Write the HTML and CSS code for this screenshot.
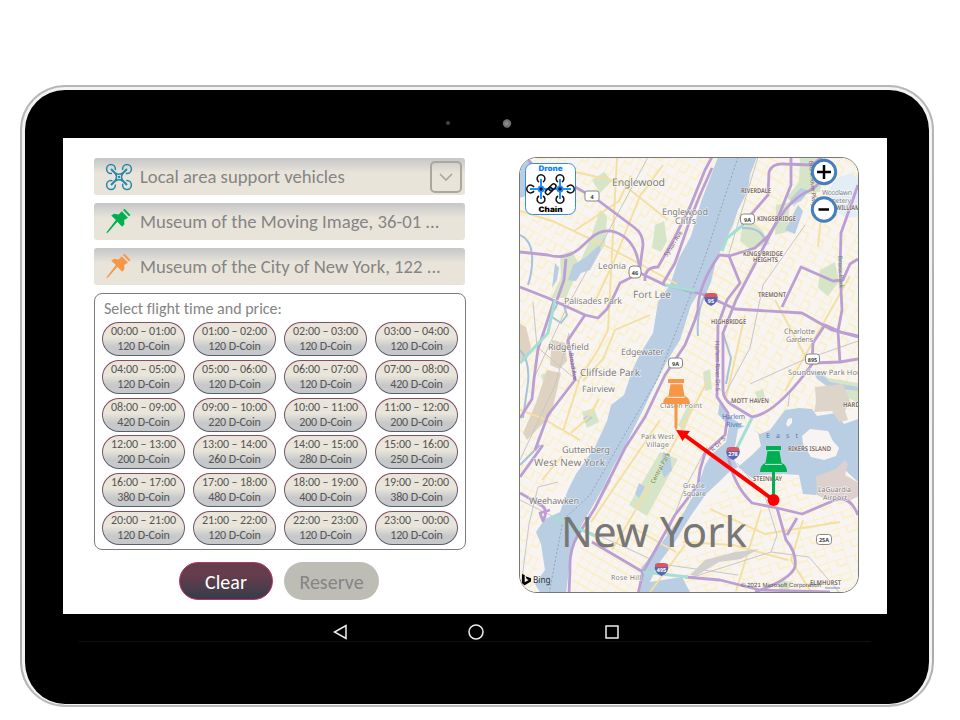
FILE: index.html
```html
<!DOCTYPE html>
<html lang="en">
<head>
<meta charset="utf-8">
<title>Drone Chain</title>
<link rel="stylesheet" href="styles.css">
</head>
<body>
<main class="tablet">
  <div class="bezel">
    <svg class="cameras" viewBox="0 0 70 14"><circle cx="4" cy="7" r="2" fill="#444"/><circle cx="63" cy="7.500" r="4.200" fill="#727272"/><circle cx="62.500" cy="7.500" r="2" fill="#8b8b8b"/></svg>
    <div class="screen">
      <section class="booking">
        <div class="field">
          <svg class="field-icon" viewBox="0 0 28 28" fill="none" stroke="#2787a8" stroke-width="1.500"><circle cx="6" cy="6" r="4.400" stroke-dasharray="23 4.600" stroke-dashoffset="-5.700"/><circle cx="22" cy="6" r="4.400" stroke-dasharray="23 4.600" stroke-dashoffset="-12.600"/><circle cx="6" cy="22" r="4.400" stroke-dasharray="23 4.600" stroke-dashoffset="1.200"/><circle cx="22" cy="22" r="4.400" stroke-dasharray="23 4.600" stroke-dashoffset="8.100"/><path d="M6 6l6 6M22 6l-6 6M6 22l6-6M22 22l-6-6" stroke-width="2"/><path d="M10.500 10q3.500 2.500 7 0-2 4 0 8-3.500-2.500-7 0 2-4 0-8z"/><circle cx="14" cy="14" r="1.200" fill="#2787a8" stroke="none"/></svg>
          <span class="field-text">Local area support vehicles</span>
          <button class="drop" aria-label="Open list"><svg viewBox="0 0 14 8"><path d="M1 1l6 6 6-6" fill="none" stroke="#aaa89d" stroke-width="1.700"/></svg></button>
        </div>
        <div class="field green">
          <svg class="field-icon" viewBox="0 0 28 28" fill="currentColor"><path d="M18 2L19.500.7l6 6.300-1.500 1.300zM16.800 3.300l6.200 6.500-3.800 2.200.2 4.200-2.300 2.500-4.700-5L3 24.500l-1.700.8.800-1.700 8.800-11.500-4.700-4.600 3-1.700 4.400.6z"/></svg>
          <span class="field-text">Museum of the Moving Image, 36-01 ...</span>
        </div>
        <div class="field orange">
          <svg class="field-icon" viewBox="0 0 28 28" fill="currentColor"><path d="M18 2L19.500.7l6 6.300-1.500 1.300zM16.800 3.300l6.200 6.500-3.800 2.200.2 4.200-2.300 2.500-4.700-5L3 24.500l-1.700.8.800-1.700 8.800-11.500-4.700-4.600 3-1.700 4.400.6z"/></svg>
          <span class="field-text">Museum of the City of New York, 122 ...</span>
        </div>
        <div class="times">
          <h2>Select flight time and price:</h2>
          <div class="slots">
            <button>00:00 – 01:00<br>120 D-Coin</button><button>01:00 – 02:00<br>120 D-Coin</button><button>02:00 – 03:00<br>120 D-Coin</button><button>03:00 – 04:00<br>120 D-Coin</button>
            <button>04:00 – 05:00<br>120 D-Coin</button><button>05:00 – 06:00<br>120 D-Coin</button><button>06:00 – 07:00<br>120 D-Coin</button><button>07:00 – 08:00<br>420 D-Coin</button>
            <button>08:00 – 09:00<br>420 D-Coin</button><button>09:00 – 10:00<br>220 D-Coin</button><button>10:00 – 11:00<br>200 D-Coin</button><button>11:00 – 12:00<br>200 D-Coin</button>
            <button>12:00 – 13:00<br>200 D-Coin</button><button>13:00 – 14:00<br>260 D-Coin</button><button>14:00 – 15:00<br>280 D-Coin</button><button>15:00 – 16:00<br>250 D-Coin</button>
            <button>16:00 – 17:00<br>380 D-Coin</button><button>17:00 – 18:00<br>480 D-Coin</button><button>18:00 – 19:00<br>400 D-Coin</button><button>19:00 – 20:00<br>380 D-Coin</button>
            <button>20:00 – 21:00<br>120 D-Coin</button><button>21:00 – 22:00<br>120 D-Coin</button><button>22:00 – 23:00<br>120 D-Coin</button><button>23:00 – 00:00<br>120 D-Coin</button>
          </div>
        </div>
        <div class="actions"><button class="clear">Clear</button><button class="reserve">Reserve</button></div>
      </section>

      <section class="map">
        <svg viewBox="520 158 338 434">
          <defs>
            <pattern id="g1" width="13" height="19" patternUnits="userSpaceOnUse" patternTransform="rotate(29)"><path d="M0 0H13M0 0V19M7 0V9M0 10H7" class="street"/></pattern>
            <pattern id="g2" width="9" height="16" patternUnits="userSpaceOnUse" patternTransform="rotate(30)"><path d="M0 0H9M0 0V16M0 8H9" class="street"/></pattern>
            <pattern id="g3" width="19" height="15" patternUnits="userSpaceOnUse" patternTransform="rotate(-17)"><path d="M0 0H19M0 0V15M9 0V7M9 7H19" class="street"/></pattern>
            <pattern id="g4" width="17" height="15" patternUnits="userSpaceOnUse" patternTransform="rotate(28)"><path d="M0 0H17M0 0V15M8 7V15M0 7H8" class="street"/></pattern>
          </defs>
          <rect x="519" y="157" width="341" height="437" fill="#f8f4f2"/>
          <path d="M519 157H718L675 270 641 350 598 445 543 510 535 594H519z" fill="url(#g1)"/>
          <path d="M756 157L720 250 690 310 655 390 627 445 590 510 568 594H640L730 450 728 410 718 390 723 330 775 225 790 157z" fill="url(#g2)"/>
          <path d="M790 157H860V410H785L760 437 728 410 720 390 723 330z" fill="url(#g4)"/>
          <path d="M735 480L690 520 640 594H860V500L800 470z" fill="url(#g3)"/>
          <g fill="#d6e5c8">
            <path d="M660 452L678 459 647 516 629 505zM600 210L607 216 605 245 592 263 577 268 590 240zM592 180l12-8 8 9-12 12zM560 255l12-4 8 15-14 32h-15l10-20zM655 225l9-4 3 20-6 11-9-4zM800 157h26l-6 35-18 3-8 12-7-10 12-15zM776 205l14-3-3 30-12 3zM742 228l8-8 12 10 8 14-20 5-10-8zM820 270l15-8 4 20-11 14-10-8zM818 370l10 8 30 5v20l-20-10zM738 425l20 7 3 15-20 20-5-6zM582 412l12-4 5 14-12 6zM541 375l10-4 3 10-10 4zM703 372l7-3 2 20-7 2zM755 392l8-3 2 8-7 4zM779 580l12 2-2 9-10-1zM678 425l10-20 5 3-9 23z"/>
          </g>
          <g fill="#b9cde3">
            <path d="M718 157H757L750 175 748 190 738 210 733 225 720 252 706 281 691 305 680 340 667 361 653 389 643 410 626 444 613 467 604 486 591 509 580 528 571 552 566 594H541L535 584 545 570 541 544 536 532 545 519 560 512 568 490 576 474 595 447 607 421 611 405 624 395 632 371 640 354 653 333 658 302 670 285 679 258 691 236 701 202z"/>
            <path d="M720 400L727 415 742 425 760 434 770 430 785 410 799 408 812 409 817 416 836 413 844 424 858 419V482L842 467 824 482 816 495 803 494 799 475 783 474 760 475 752 478 738 467 728 473 720 481 706 494 690 517 676 540 657 566 650 582 682 577 691 594H640L641 568 660 545 684 512 697 489 705 465 712 454 726 442 729 426 718 414z"/>
            <path d="M785 230L798 205 803 211 795 234zM791 198l10-10 8 3-8 10-12 5zM812 370l8 3 10 9 28 5v4l-30-4-11-8zM586 257l13-12 2 5-11 20-9 3-5 8-8-1 5-15zM519 165l8-6 8 7-4 8-5 22-7 2zM639 483l6 4-6 11-4-4zM663 452l7 3 2 15-8 8-3-9zM700 276l9-8 2-7 4 4-4 17-6 14-7-3zM555 263l4 5-2 12-5 8zM583 418l6-3 4 3-8 5z"/>
          </g>
          <g fill="#e2edf6"><path d="M837 178l14-5 7 5v38l-10 2-20-10-2-14z"/></g>
          <g fill="#f8f4f2"><path d="M802 436l8-7 18 2 5 10 6 7-3 8-12 4-13-3-8-13zM786 424l2-5 4-1v5l-4 4z"/><path d="M738 429l8-3 12 7 3 13-9 9-14 12-5-10z"/></g>
          <path d="M816 476l20-7 9-9 3 4-3 11 14 8v13l-10 5-21-1-11-5z" fill="#ddd0cd"/>
          <path d="M815 387l28-3 7 17-5 10 3 9-9 2-7-11-18 1 2-10z" fill="#ddd4ca"/>
          <path d="M519 323l7 4 5 20-5 15-7-3zM552 340l13 3 2 18-8 8-9-4zM547 370l14 3-10 42-24 25-4-7 13-30z" fill="#dfd2c0"/>
          <g fill="none" stroke="#a9c2dc" stroke-width="2">
            <path d="M520 235q11 5 12 20t-4 30M520 350q10 10 8 33l-5 35M563 303l4 12-6 8-9-6M742 228q22-1 24 17M723 333l8 25-5 26M548 317q15-15 5-17M540 445l-20 20M706 292q-10 20-8 44"/>
          </g>
          <path d="M738 157L703 263 657 380 625 434 590 495 563 520 549 594" fill="none" stroke="#91a5b8" stroke-dasharray="2 2"/>
          <g fill="none" stroke="#f4dfa0" stroke-width="1.900">
            <path d="M663 165L640 196 612 266 596 299M520 211L552 221 610 248 677 284M575 172l45 10 48 38M617 157L608 330 598 350 580 378 563 431M650 315l-35 15-12 29-20 22M631 176l-12 25-45 30M520 410l22 8 38 22M599 399l-10 18-18 16M542 480l20-24M630 526l46 26M612 550L665 460 707 382M591 522L660 420M812 190l10 17-4 40M745 315l-19 83M850 276l-65 115M775 300l35 65M788 560l-55-15-50-3M710 509l55 25 75-12M650 592l35-47M803 520l-12 40 20 32M761 510l-25 81"/>
          </g>
          <g fill="none" stroke="#c7c7c7" stroke-width="1">
            <path d="M648 157L607 234 566 309 534 378M533 302l4 45 42 35M520 460l35-75 5-17 9-35M520 594l9-70 9-37 20-5M520 500l32 16 66 28 43 20 77 11M611 480l-22 39M707 447L684 490 667 535M758 157L742 210 728 257M805 225L763 285 750 348 725 394M858 341L801 361 750 384M737 463L765 496 777 535 771 552 690 578M771 552l38 5 30 35M790 390l-2 17"/>
          </g>
          <path d="M690 575l15-15 30-8 24-3-18 10-22 3-23 14z" fill="#d2d0cf"/>
          <g class="road">
            <path d="M520 252L548 255Q566 260 579 249L591 238Q602 228 615 232 638 240 640 273L665 285 690 291"/>
            <path d="M566 259L564 280 557 300"/>
            <path d="M526 157L540 174 575 187 595 198 635 228Q643 234 643 245L639 275"/>
            <path d="M520 287L548 298 585 315 598 318 607 309 613 298 620 283 638 274"/>
            <path d="M645 281Q644 267 658 267L675 237 690 207 705 170 712 157"/>
            <path d="M662 285L675 263 690 220 700 195 712 168"/>
            <path d="M685 290L705 295 735 309 802 313 832 330 858 337"/>
            <path d="M742 225L768 195 769 172Q772 163 785 164L812 165 822 157"/>
            <path d="M720 254Q698 285 698 310L695 320 685 345 665 375 645 417 625 448 595 508 578 535Q569 550 570 570L569 594"/>
            <path d="M720 255L729 256 740 283 727 300 718 325 717 397 728 413 725 435 705 453 700 470 698 485 675 515 643 572 638 594"/>
            <path d="M791 157V185L775 225 756 262 736 300 723 333V390Q723 399 732 405L752 417Q776 414 813 363L840 362 858 359"/>
            <path d="M729 256L755 248 768 236 785 210Q797 195 813 189L822 180"/>
            <path d="M812 363L813 343 825 325 841 332 858 336M840 363L838 331 842 310 840 270 841 233 858 185"/>
            <path d="M782 307L801 267 833 281 843 280 850 264 858 259"/>
            <path d="M728 455Q733 485 752 503L777 508 802 514 835 500Q850 495 858 515M777 508L786 540Q797 553 795 567 790 580 755 592M797 518l-10 17M685 577L720 580 760 590 830 592"/>
            <path d="M520 493L541 505Q549 510 543 521L540 513 550 510M592 542L643 572M543 445L520 477M585 315L568 340 575 380 548 415 535 450M520 418l12-19 2-20 4-30 16-48"/>
          </g>
          <g fill="none" stroke="#a4dfd3" stroke-width="3"><path d="M722 251l5-13 16-13M665 285l30 6M552 517l43 19M520 363l28-30 7-33M752 418l-15 30M643 572l45 5"/></g>
          <g class="place">
            <text x="612" y="186" textLength="53" font-size="10.500">Englewood</text><text x="662" y="215" textLength="46" font-size="9">Englewood</text><text x="675" y="224" textLength="21" font-size="9">Cliffs</text>
            <text x="598" y="269" textLength="28" font-size="8.800">Leonia</text><text x="633" y="298" textLength="38" font-size="10">Fort Lee</text><text x="564" y="304" textLength="58" font-size="8.800">Palisades Park</text>
            <text x="548" y="350" textLength="41" font-size="8.800">Ridgefield</text><text x="621" y="355" textLength="43" font-size="8.800">Edgewater</text><text x="580" y="376" textLength="60" font-size="10">Cliffside Park</text><text x="582" y="392" textLength="33" font-size="8.800">Fairview</text>
            <text x="660" y="408" textLength="42" font-size="7">Clason Point</text><text x="641" y="439" textLength="33" font-size="7">Park West</text><text x="646" y="447" textLength="23" font-size="7">Village</text>
            <text x="562" y="453" textLength="48" font-size="9.300">Guttenberg</text><text x="534" y="466" textLength="71" font-size="10">West New York</text><text x="529" y="504" textLength="50" font-size="9">Weehawken</text>
            <text x="611" y="580" textLength="30" font-size="7">Rose Hill</text><text x="683" y="488" textLength="22" font-size="7">Gracie</text><text x="683" y="496" textLength="23" font-size="7">Square</text>
            <text x="818" y="492" textLength="33" font-size="7">LaGuardia</text><text x="823" y="499.500" textLength="24" font-size="7">Airport</text><text x="784" y="334" textLength="31" font-size="7.500">Charlotte</text><text x="786" y="342" textLength="27" font-size="7.500">Gardens</text>
            <text x="788" y="375" textLength="76" font-size="7.500">Soundview Park Hom</text><text x="822" y="195" textLength="30" font-size="7">Woodlawn</text><text x="822" y="203" textLength="29" font-size="7">Cemetery</text>
          </g>
          <g class="district">
            <text x="741" y="192.500" textLength="30" lengthAdjust="spacingAndGlyphs">RIVERDALE</text><text x="757" y="221" textLength="39" lengthAdjust="spacingAndGlyphs">KINGSBRIDGE</text><text x="743" y="256" textLength="40" lengthAdjust="spacingAndGlyphs">KINGS BRIDGE</text><text x="753" y="261.800" textLength="25" lengthAdjust="spacingAndGlyphs">HEIGHTS</text>
            <text x="758" y="296.500" textLength="28" lengthAdjust="spacingAndGlyphs">TREMONT</text><text x="711" y="323.500" textLength="35" lengthAdjust="spacingAndGlyphs">HIGHBRIDGE</text><text x="731" y="402.500" textLength="38" lengthAdjust="spacingAndGlyphs">MOTT HAVEN</text><text x="843" y="407" textLength="19" lengthAdjust="spacingAndGlyphs">HARDI</text><text x="836" y="210" textLength="24" lengthAdjust="spacingAndGlyphs">WILLIAM</text>
            <text x="788" y="451" textLength="43" lengthAdjust="spacingAndGlyphs">RIKERS ISLAND</text><text x="753" y="481" textLength="29" lengthAdjust="spacingAndGlyphs">STEINWAY</text><text x="810" y="584.500" textLength="31" lengthAdjust="spacingAndGlyphs">ELMHURST</text>
          </g>
          <g class="way">
            <text transform="translate(667 257) rotate(-57)" textLength="29">Sylvan Ave</text><text transform="translate(569 353) rotate(81)" textLength="28">Broad Ave</text><text transform="translate(715 341) rotate(89)" textLength="50">Harlem River Dr S</text><text transform="translate(809 161) rotate(86)" textLength="46">Bronx River Pkwy</text><text transform="translate(838 256) rotate(87)" textLength="32" fill="#64906b">Bronx Park</text><text transform="translate(713 452) rotate(-45)" textLength="18">R Dr S</text><text transform="translate(654 484) rotate(-62)" textLength="34" fill="#4b9370">Central Park</text>
          </g>
          <g class="water"><text x="722" y="419" textLength="23">Harlem</text><text x="726" y="426.500" textLength="16">River</text><text x="766" y="438" textLength="32">East</text></g>
          <text x="561" y="546.500" textLength="186" class="city">New York</text>
          <g class="shield"><rect x="585" y="191" width="14" height="10" rx="2"/><text x="592" y="198.500">4</text><rect x="629" y="266" width="12" height="12" rx="4"/><text x="635" y="275">46</text><rect x="740.500" y="214" width="14" height="10" rx="3"/><text x="747.500" y="221.500">9A</text><rect x="668.500" y="358" width="14" height="10" rx="3"/><text x="675.500" y="365.500">9A</text><rect x="805.500" y="354" width="14" height="10" rx="3"/><text x="812.500" y="361.500">895</text><rect x="816.500" y="534.500" width="15" height="10" rx="3"/><text x="824" y="542">25A</text></g>
          <g class="interstate"><g transform="translate(711 299)"><path d="M-6-5Q0-7 6-5 9 3 0 7-9 3-6-5" fill="#5967ae"/><path d="M-6-5Q0-7 6-5V-2H-6z" fill="#e85359"/><text y="3.500">95</text></g><g transform="translate(733 453)"><path d="M-6-5Q0-7 6-5 9 3 0 7-9 3-6-5" fill="#5967ae"/><path d="M-6-5Q0-7 6-5V-2H-6z" fill="#e85359"/><text y="3">278</text></g><g transform="translate(661.500 569)"><path d="M-6-5Q0-7 6-5 9 3 0 7-9 3-6-5" fill="#5967ae"/><path d="M-6-5Q0-7 6-5V-2H-6z" fill="#e85359"/><text y="3">495</text></g></g>
          <path d="M522 574l2.700 1v7.300l4-2.200-2-1-1.200-2.800 5.500 2v3.200l-6.300 3.700-2.700-1.600z" fill="#000"/><text x="533" y="583" textLength="17.500" lengthAdjust="spacingAndGlyphs" font-size="9.500" fill="#303030">Bing</text>
          <text x="741" y="587" textLength="80" class="copyright">© 2021 Microsoft Corporation</text><path d="M825 588h15" stroke="#577bc1" stroke-width=".8"/>
          <path d="M668 379h16v4h-1.700l2.200 13q5.500 2 5.500 8h-27q0-6 5.500-8l2.200-13H668zM674.500 403h3v24l-1.500 4-1.500-4z" fill="#f79646"/><path d="M669.500 383.700h13M667.300 397.300h17.500" stroke="#f8f4f2"/>
          <path d="M766 446h15v4h-1.700l2.200 13q5.500 2 5.500 9h-27q0-7 5.500-9l2.200-13H766zM772 471h3v24h-3z" fill="#00b050"/><path d="M767.500 450.600h12M765 464.400h17" stroke="#cfdde9"/>
          <path d="M773.500 500L683 434" stroke="#f00" stroke-width="4"/><path d="M676 430l14 1-7.500 10z" fill="#f00"/><circle cx="773.500" cy="500" r="6" fill="#f00"/>
          <g fill="#fff" stroke="#467fbd" stroke-width="3"><circle cx="824" cy="172" r="11.700"/><circle cx="824" cy="209.500" r="11.700"/></g><path d="M817 172h14M824 165v14M818.500 209.500h10.500" stroke="#000" stroke-width="2.500"/>
          <g><rect x="525.500" y="163.500" width="50" height="51" rx="7" fill="#fff" stroke="#398cdf"/><text x="538.500" y="171" textLength="24" lengthAdjust="spacingAndGlyphs" class="logo" fill="#1684f5">Drone</text><text x="538.500" y="212" textLength="24" lengthAdjust="spacingAndGlyphs" class="logo" fill="#000">Chain</text><path d="M530 189h41M541 179v20M560 179v20" stroke="#258fff" stroke-width="2"/><g fill="#258fff"><circle cx="541" cy="189" r="3.500"/><circle cx="560" cy="189" r="3.500"/></g><g fill="#111"><circle cx="541" cy="189" r="1.700"/><circle cx="560" cy="189" r="1.700"/></g><g fill="none" stroke="#111" stroke-width="1.500"><path d="M539 182a3.900 3.900 0 1 1 4 0M558 182a3.900 3.900 0 1 1 4 0M539 196a3.900 3.900 0 1 0 4 0M558 196a3.900 3.900 0 1 0 4 0M534 187a3.900 3.900 0 1 0 0 4M567 187a3.900 3.900 0 1 1 0 4"/><g transform="rotate(-45 550.500 189)"><rect x="544" y="187" width="8" height="4.500" rx="2.200"/><rect x="549" y="187" width="8" height="4.500" rx="2.200"/></g></g></g>
        </svg>
      </section>
    </div>
    <nav class="system-bar"><svg viewBox="0 0 16 16"><path d="M14 1.500v13L2.500 8z"/></svg><svg viewBox="0 0 16 16"><circle cx="8" cy="8" r="7"/></svg><svg viewBox="0 0 16 16"><path d="M2 2h12v12H2z"/></svg></nav>
  </div>
</main>
</body>
</html>
```

FILE: styles.css
```css
* { box-sizing: border-box; }
body { margin: 0; background: #fff; overflow: hidden; font-family: Carlito, Lato, "Noto Sans", sans-serif; font-variant-ligatures: none; }
button { font-family: inherit; font-variant-ligatures: none; padding: 0; }
.tablet { width: 914px; height: 622px; margin: 85px 0 0 20px; padding: 2px; border-radius: 45px; background: linear-gradient(#b5b7b9, #aaa 90%, #bbb); }
.bezel { width: 910px; height: 618px; border: solid #f3f3f3; border-width: 3px 3px 1px; border-radius: 43px; background: #000; display: flex; flex-direction: column; align-items: center; }
.cameras { width: 70px; height: 14px; flex: none; margin: 26px 0 8px; transform: translateX(2px); }
.screen { width: 824px; height: 476px; flex: none; background: #fff; display: flex; padding: 19px 28px 0 31px; justify-content: space-between; margin-right: 4px; }
.booking { width: 372px; padding-top: 1px; }
.field { width: 371px; height: 37px; margin-bottom: 8px; border-radius: 3px; background: linear-gradient(#c5c6c8, #e8e4da 40%); display: flex; align-items: center; padding: 0 3px 0 11px; color: #858585; }
.field-icon { width: 28px; height: 28px; margin-right: 7px; flex: none; }
.green .field-icon { color: #00b050; }
.orange .field-icon { color: #f79646; }
.field-text { font-size: 18.7px; line-height: 38px; white-space: nowrap; padding-top: 1px; }
.drop { width: 32px; height: 32px; margin-left: auto; border: 2px solid #aaa89d; border-radius: 5px; background: none; display: grid; place-items: center; }
.drop svg { width: 14px; height: 8px; }
.times { height: 257px; border: 1px solid #7b7b7b; border-radius: 8px; padding: 5px 7px; }
.times h2 { margin: 0 0 4px 2px; font-size: 16px; line-height: 19px; font-weight: 400; color: #858585; }
.slots { display: grid; grid-template-columns: repeat(4, 83px); justify-content: space-between; grid-auto-rows: 34px; row-gap: 3.8px; }
.slots button { border: 1px solid transparent; border-radius: 17px; background: linear-gradient(#e9e5da 45%, #c7c8ca 75%) padding-box, linear-gradient(#874c60, #56606e) border-box; font-size: 12px; line-height: 15px; letter-spacing: -.12px; color: #555; white-space: nowrap; }
.actions { display: flex; gap: 11px; padding: 12px 0 0 85px; }
.actions button { width: 94px; height: 38px; border-radius: 19px; font-size: 20px; padding-top: 2px; }
.actions .clear { border: 1px solid #bd326d; background: linear-gradient(#653d4c 35%, #353d4a); color: #fff; }
.actions .reserve { width: 95px; border: 0; background: #bebdb5; color: #858585; }
.map { width: 340px; height: 436px; border: 1px solid #777; border-radius: 18px; overflow: hidden; font-family: "Noto Sans", sans-serif; }
.map svg { display: block; width: 338px; height: 434px; }
.map text { text-rendering: geometricPrecision; }
.street { fill: none; stroke: #faefbd; stroke-width: 1.3; }
.road { fill: none; stroke: #bb9fd3; stroke-width: 2.8; stroke-linejoin: round; }
.place { fill: #808080; stroke: #fff; stroke-width: 1.5px; stroke-opacity: .6; paint-order: stroke; }
.district { font-size: 6.6px; font-weight: 600; fill: #78645c; stroke: #fff; stroke-width: 1px; stroke-opacity: .7; paint-order: stroke; }
.way { font-size: 6px; fill: #80658e; }
.water { font-size: 7px; fill: #527eb7; }
.city { font-size: 42px; fill: #777; }
.shield rect { fill: #fff; stroke: #888; stroke-width: 1; }
.shield text { font-size: 5.5px; font-weight: 700; fill: #444; text-anchor: middle; }
.interstate text { font-size: 5.5px; font-weight: 700; fill: #fff; text-anchor: middle; }
.copyright { font: 6px "Liberation Sans", sans-serif; fill: #555; }
.logo { font: 900 7.5px Inter, sans-serif; }
.system-bar { width: 792px; height: 28px; padding: 8px 0 0 1px; border-bottom: 1px solid #10120c; display: flex; justify-content: center; align-items: center; gap: 120px; margin-right: 4px; }
.system-bar svg { width: 16px; height: 16px; fill: none; stroke: #eee; stroke-width: 1.5; }
```
